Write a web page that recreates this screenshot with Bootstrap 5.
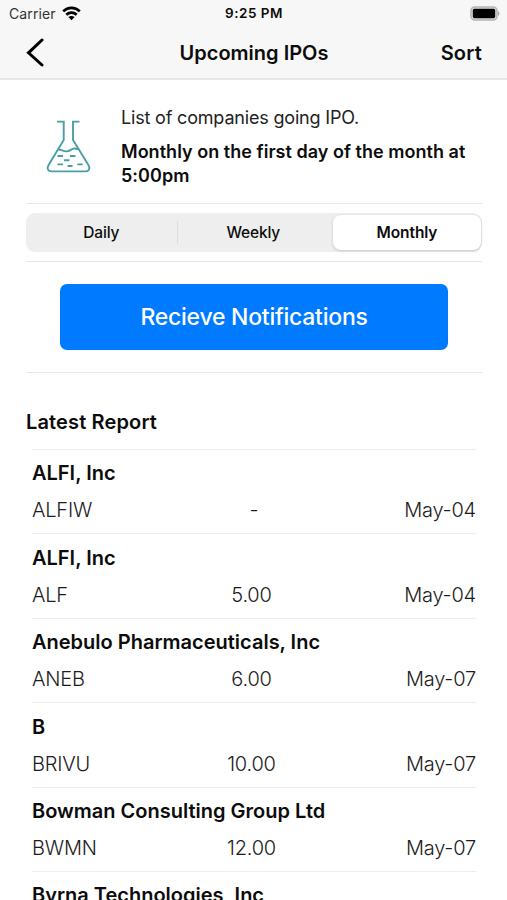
<!DOCTYPE html>
<html lang="en">
<head>
<meta charset="utf-8">
<meta name="viewport" content="width=device-width, initial-scale=1">
<title>Upcoming IPOs</title>
<link href="https://cdn.jsdelivr.net/npm/bootstrap@5.3.0/dist/css/bootstrap.min.css" rel="stylesheet">
<style>
  body { font-family: Inter, "Liberation Sans", sans-serif; color: #0c0c0c; height: 900px; overflow: hidden; background: #fff; }
  .app-head { background: #f7f7f7; height: 80px; border-bottom: 2px solid #e6e6e6; }
  .status { height: 27px; font-size: 14px; padding: 0 7px 0 9px; }
  .carrier { color: #333; letter-spacing: .1px; }
  .wifi { margin-left: 6px; }
  .clock { letter-spacing: .5px; font-size: 13.5px; margin-right: 1px; }
  .titlebar { height: 51px; font-size: 20px; padding: 0 25px; }
  .side { flex: 1 1 0; }
  .page-title { padding-left: 1px; }
  .sort { letter-spacing: .2px; }
  .body-pad { padding: 0 25px 0 26px; }
  .intro { height: 123px; padding: 26px 0 0 20px; }
  .flask { width: 46px; height: 54px; margin-top: 13px; }
  .intro-copy { margin-left: 29px; font-size: 18px; line-height: 24px; margin-right: -10px; }
  .intro-copy .lead-line { letter-spacing: -.18px; color: #222; }
  .intro-copy p + p { margin-top: 10px; letter-spacing: .03px; }
  .rule { height: 1px; background: #e7e7e7; }
  .segments { height: 39px; margin: 9px 0; border-radius: 9px; background: #eee; padding: 2px 1px 2px 0; font-size: 15.5px; font-weight: 500; }
  .segment { flex: 0 0 150.5px; letter-spacing: -.15px; }
  .segment.is-on { flex: 0 0 148px; margin-left: auto; background: #fff; border-radius: 8px; box-shadow: 0 1px 3px rgba(0,0,0,.18); font-weight: 600; letter-spacing: -.1px; }
  .divider { width: 1.5px; height: 23px; background: #dcdcdc; }
  .notify { height: 66px; margin: 22px 34px 22px; width: 388px; border: 0; border-radius: 7px; background: #007aff; color: #fff; font-size: 23px; font-weight: 500; letter-spacing: -.25px; }
  .latest { font-size: 20px; height: 76px; padding-top: 34px; line-height: 30px; letter-spacing: .14px; }
  .report { margin: 0 6px; }
  .entry { height: 84.45px; border-top: 1.5px solid #ededed; padding-top: 8.2px; }
  .company { font-size: 20px; line-height: 30px; white-space: nowrap; }
  .facts { font-size: 20px; line-height: 30px; margin-top: 7px; font-weight: 300; color: #1c1c1c; letter-spacing: -.2px; }
  .price { padding-right: 5px; }
  .price.none { padding-right: 0; }
</style>
</head>
<body>
<header class="app-head">
  <div class="status d-flex align-items-center">
    <div class="side d-flex align-items-center carrier">Carrier
      <svg class="wifi" width="19" height="15" viewBox="0 0 19 15" fill="none" stroke="#000" stroke-width="2.7">
        <path d="M1.200 5.400C5.900 .8 13.100 .8 17.800 5.400M4.300 8.700c2.900-2.800 7.500-2.800 10.400 0"/>
        <path d="M9.500 14.200 6.400 11.100c1.800-1.500 4.400-1.500 6.200 0z" fill="#000" stroke="none"/>
      </svg>
    </div>
    <div class="fw-semibold clock">9:25 PM</div>
    <div class="side text-end lh-1">
      <svg width="30" height="15" viewBox="0 0 30 15">
        <rect x="1" y="1" width="26" height="13" rx="4" fill="#ddd" stroke="#b4b4b4" stroke-width="1.6"/>
        <rect x="2.800" y="2.800" width="22.400" height="9.400" rx="1.600"/>
        <path d="M28 5v5c2-1 2-4 0-5z" fill="#aaa"/>
      </svg>
    </div>
  </div>
  <div class="titlebar d-flex align-items-center fw-semibold">
    <div class="side">
      <svg width="20" height="30" viewBox="0 0 20 30" fill="none" stroke="#000" stroke-width="3" stroke-linecap="round"><path d="M17 2 3.500 14.800 17 27"/></svg>
    </div>
    <div class="page-title">Upcoming IPOs</div>
    <div class="side text-end sort">Sort</div>
  </div>
</header>

<main class="body-pad">
  <section class="intro d-flex">
    <svg class="flask flex-shrink-0" viewBox="46 119 46 54" fill="none" stroke="#4a9ea8" stroke-width="1.9">
      <path d="M57 121.600h6.700V140L48.300 165.500c-1.600 3.100-.2 5.900 3.100 5.900h34.200c3.300 0 4.700-2.800 3.100-5.900L73 140v-18.400h6.500"/>
      <path d="M58 149.600c3-.6 5 2 8.500 1.800 4-.2 4.500-2.900 8-2.900 2.300 0 3 .7 4.600 1.100"/>
      <path d="M57.500 156H63M70 156h5.500M64 160.300h5.500M57.500 164.400H63M67.500 166h5M77.300 164.400h5.400"/>
    </svg>
    <div class="intro-copy">
      <p class="mb-0 fw-normal lead-line">List of companies going IPO.</p>
      <p class="mb-0 fw-semibold">Monthly on the first day of the month at<br>5:00pm</p>
    </div>
  </section>
  <div class="rule"></div>
  <div class="segments d-flex align-items-center">
    <div class="segment text-center">Daily</div>
    <div class="divider"></div>
    <div class="segment text-center">Weekly</div>
    <div class="segment is-on h-100 d-flex align-items-center justify-content-center">Monthly</div>
  </div>
  <div class="rule"></div>
  <button class="btn notify" type="button">Recieve Notifications</button>
  <div class="rule"></div>
  <h2 class="latest fw-semibold mb-0">Latest Report</h2>
  <section class="report">
    <article class="entry"><div class="company fw-semibold">ALFI, Inc</div><div class="facts row g-0"><div class="col">ALFIW</div><div class="col text-center price none">-</div><div class="col text-end">May-04</div></div></article>
    <article class="entry"><div class="company fw-semibold">ALFI, Inc</div><div class="facts row g-0"><div class="col">ALF</div><div class="col text-center price">5.00</div><div class="col text-end">May-04</div></div></article>
    <article class="entry"><div class="company fw-semibold">Anebulo Pharmaceuticals, Inc</div><div class="facts row g-0"><div class="col">ANEB</div><div class="col text-center price">6.00</div><div class="col text-end">May-07</div></div></article>
    <article class="entry"><div class="company fw-semibold">B</div><div class="facts row g-0"><div class="col">BRIVU</div><div class="col text-center price">10.00</div><div class="col text-end">May-07</div></div></article>
    <article class="entry"><div class="company fw-semibold">Bowman Consulting Group Ltd</div><div class="facts row g-0"><div class="col">BWMN</div><div class="col text-center price">12.00</div><div class="col text-end">May-07</div></div></article>
    <article class="entry"><div class="company fw-semibold">Byrna Technologies, Inc</div></article>
  </section>
</main>
<script src="https://cdn.jsdelivr.net/npm/bootstrap@5.3.0/dist/js/bootstrap.bundle.min.js"></script>
</body>
</html>
